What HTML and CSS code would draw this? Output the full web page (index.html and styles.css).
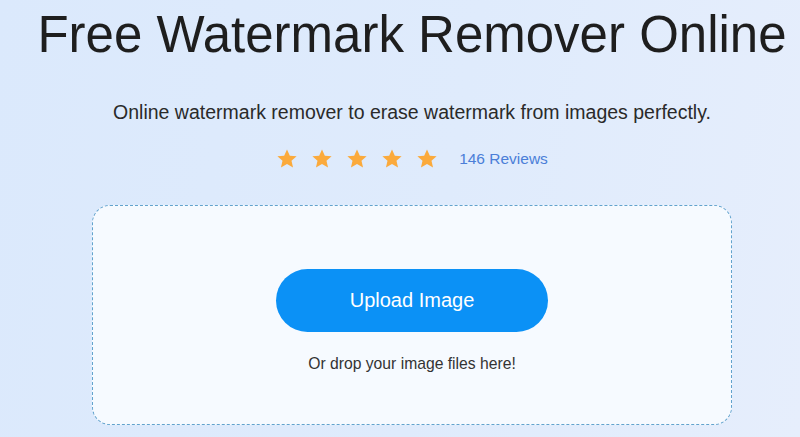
FILE: index.html
```html
<!DOCTYPE html>
<html lang="en">
<head>
  <meta charset="UTF-8">
  <meta name="viewport" content="width=device-width, initial-scale=1.0">
  <title>Free Watermark Remover Online</title>
  <link rel="stylesheet" href="styles.css">
</head>
<body>
  <!-- Hero section -->
  <div class="hero">
    <h1>Free Watermark Remover Online</h1>
    <p class="subtitle">Online watermark remover to erase watermark from images perfectly.</p>
    <div class="rating">
      <div class="stars">
        <svg class="star" viewBox="0 0 24 24"><path d="M12 1.5l3.1 7 7.4.6-5.6 4.9 1.7 7.4L12 17.5l-6.6 3.9 1.7-7.4L1.5 9.1l7.4-.6z"/></svg>
        <svg class="star" viewBox="0 0 24 24"><path d="M12 1.5l3.1 7 7.4.6-5.6 4.9 1.7 7.4L12 17.5l-6.6 3.9 1.7-7.4L1.5 9.1l7.4-.6z"/></svg>
        <svg class="star" viewBox="0 0 24 24"><path d="M12 1.5l3.1 7 7.4.6-5.6 4.9 1.7 7.4L12 17.5l-6.6 3.9 1.7-7.4L1.5 9.1l7.4-.6z"/></svg>
        <svg class="star" viewBox="0 0 24 24"><path d="M12 1.5l3.1 7 7.4.6-5.6 4.9 1.7 7.4L12 17.5l-6.6 3.9 1.7-7.4L1.5 9.1l7.4-.6z"/></svg>
        <svg class="star" viewBox="0 0 24 24"><path d="M12 1.5l3.1 7 7.4.6-5.6 4.9 1.7 7.4L12 17.5l-6.6 3.9 1.7-7.4L1.5 9.1l7.4-.6z"/></svg>
      </div>
      <a class="reviews" href="#">146 Reviews</a>
    </div>

    <!-- Upload area -->
    <div class="upload-box">
      <button class="upload-btn">Upload Image</button>
      <p class="drop-hint">Or drop your image files here!</p>
    </div>
  </div>
</body>
</html>
```

FILE: styles.css
```css
body {
  margin: 0;
  font-family: "Liberation Sans", Arial, sans-serif;
  background: linear-gradient(100deg, #dbe9fc 0%, #dfebfc 55%, #e6eefc 100%);
  height: 437px;
  overflow: hidden;
}
.hero {
  width: 776px;
  margin-left: 24px;
  display: flex;
  flex-direction: column;
  align-items: center;
}
h1 {
  margin: 6px 0 0;
  font-size: 51px;
  font-weight: normal;
  color: #1e1e1e;
  line-height: 58px;
  white-space: nowrap;
}
.subtitle {
  margin: 37px 0 0;
  font-size: 19.5px;
  color: #2a2a2a;
  line-height: 22px;
}
.rating {
  margin-top: 24px;
  display: flex;
  align-items: center;
  gap: 21px;
  height: 24px;
}
.stars {
  display: flex;
  gap: 13px;
}
.star {
  width: 22px;
  height: 22px;
  fill: #fbaa3c;
}
.reviews {
  color: #4b7fd8;
  font-size: 15.5px;
  text-decoration: none;
}
.upload-box {
  margin-top: 34px;
  width: 638px;
  height: 218px;
  border: 1px dashed #62a3cd;
  border-radius: 18px;
  background-color: #f6faff;
  display: flex;
  flex-direction: column;
  align-items: center;
}
.upload-btn {
  margin-top: 63px;
  width: 272px;
  height: 63px;
  border: none;
  border-radius: 32px;
  background-color: #0b91f6;
  color: #fff;
  font-family: inherit;
  font-size: 20px;
  cursor: pointer;
}
.drop-hint {
  margin: 23px 0 0;
  font-size: 15.7px;
  color: #333;
}
```
